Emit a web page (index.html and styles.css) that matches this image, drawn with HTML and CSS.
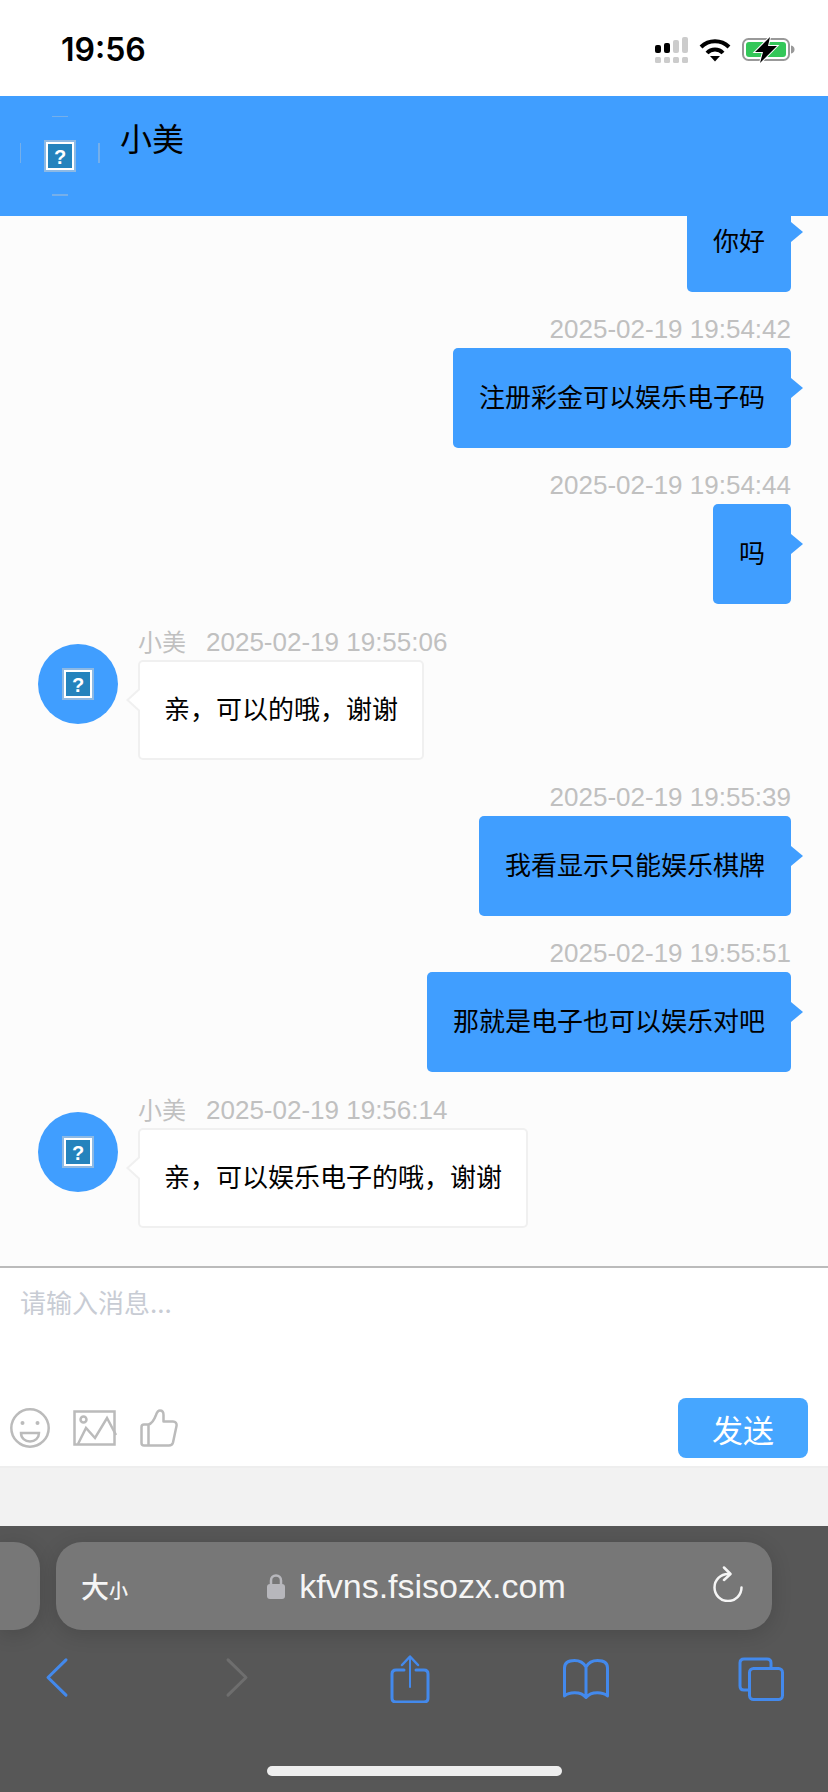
FILE: index.html
```html
<!DOCTYPE html>
<html lang="zh-CN">
<head>
    <meta charset="UTF-8">
    <meta name="viewport" content="width=device-width, initial-scale=1.0">
    <title>小美</title>
    <link rel="stylesheet" href="styles.css">
</head>
<body>
    <div class="status-bar">
        <span class="clock">19:56</span>
        <div class="status-icons">
            <svg class="signal" width="33" height="26" viewBox="0 0 33 26">
                <rect x="0" y="8" width="6" height="8" rx="2" fill="#000"/>
                <rect x="9" y="6" width="6" height="10" rx="2" fill="#000"/>
                <rect x="18" y="3" width="6" height="13" rx="2" fill="#ccc"/>
                <rect x="27" y="0" width="6" height="16" rx="2" fill="#ccc"/>
                <rect x="0" y="20" width="6" height="6" rx="1.5" fill="#ccc"/>
                <rect x="9" y="20" width="6" height="6" rx="1.5" fill="#ccc"/>
                <rect x="18" y="20" width="6" height="6" rx="1.5" fill="#ccc"/>
                <rect x="27" y="20" width="6" height="6" rx="1.5" fill="#ccc"/>
            </svg>
            <svg class="wifi" width="32" height="25" viewBox="0 0 32 25" fill="none" stroke="#000" stroke-width="4">
                <path d="M2 10A20 20 0 0 1 30 10"/>
                <path d="M8 16A11 11 0 0 1 24 16"/>
                <path d="M11 19H21L16 24.5Z" fill="#000" stroke="none"/>
            </svg>
            <svg class="battery" width="53" height="26" viewBox="0 0 53 26">
                <rect x="1" y="2" width="46" height="21" rx="5.5" fill="none" stroke="#999" stroke-width="2"/>
                <rect x="4" y="5" width="40" height="15" rx="3" fill="#34c759"/>
                <path d="M49 8.5c2.5.5 3.5 2 3.5 4s-1 3.500-3.500 4Z" fill="#999"/>
                <path d="M28 0 13 15H21L18 26 35 9H26Z" fill="#000" stroke="#fff" stroke-width="2" paint-order="stroke"/>
            </svg>
        </div>
    </div>

    <header class="chat-head">
        <div class="head-avatar">
            <svg width="80" height="80" viewBox="0 0 80 80">
                <path d="M32 0H48M0 27V47M79 27V47M32 79H48" stroke="#d8cfc4" stroke-width="1" stroke-opacity=".7" fill="none"/>
                <g transform="translate(24 24)">
                    <rect width="32" height="32" fill="#8db9e4"/>
                    <rect x="2" y="2" width="28" height="28" fill="#fff"/>
                    <rect x="4" y="4" width="24" height="24" fill="#2483bd"/>
                    <text x="16" y="24" class="missing-mark">?</text>
                </g>
            </svg>
        </div>
        <h1 class="head-name">小美</h1>
    </header>

    <main class="chat-log">
        <div class="msg msg-out">
            <div class="bubble">你好</div>
        </div>
        <div class="msg msg-out">
            <div class="msg-time">2025-02-19 19:54:42</div>
            <div class="bubble">注册彩金可以娱乐电子码</div>
        </div>
        <div class="msg msg-out">
            <div class="msg-time">2025-02-19 19:54:44</div>
            <div class="bubble">吗</div>
        </div>
        <div class="msg msg-in">
            <div class="avatar">
                <svg width="32" height="32" viewBox="0 0 32 32">
                    <rect width="32" height="32" fill="#8db9e4"/>
                    <rect x="2" y="2" width="28" height="28" fill="#fff"/>
                    <rect x="4" y="4" width="24" height="24" fill="#2483bd"/>
                    <text x="16" y="24" class="missing-mark">?</text>
                </svg>
            </div>
            <div class="msg-body">
                <div class="msg-time"><span class="msg-from">小美</span>2025-02-19 19:55:06</div>
                <div class="bubble">亲，可以的哦，谢谢</div>
            </div>
        </div>
        <div class="msg msg-out">
            <div class="msg-time">2025-02-19 19:55:39</div>
            <div class="bubble">我看显示只能娱乐棋牌</div>
        </div>
        <div class="msg msg-out">
            <div class="msg-time">2025-02-19 19:55:51</div>
            <div class="bubble">那就是电子也可以娱乐对吧</div>
        </div>
        <div class="msg msg-in">
            <div class="avatar">
                <svg width="32" height="32" viewBox="0 0 32 32">
                    <rect width="32" height="32" fill="#8db9e4"/>
                    <rect x="2" y="2" width="28" height="28" fill="#fff"/>
                    <rect x="4" y="4" width="24" height="24" fill="#2483bd"/>
                    <text x="16" y="24" class="missing-mark">?</text>
                </svg>
            </div>
            <div class="msg-body">
                <div class="msg-time"><span class="msg-from">小美</span>2025-02-19 19:56:14</div>
                <div class="bubble">亲，可以娱乐电子的哦，谢谢</div>
            </div>
        </div>
    </main>

    <section class="composer">
        <div class="composer-input">请输入消息...</div>
        <div class="composer-tools">
            <div class="tool-icons">
                <svg width="40" height="40" viewBox="0 0 40 40" fill="none" stroke="#bbb" stroke-width="2.500">
                    <circle cx="20" cy="20" r="18.700"/>
                    <circle cx="12.500" cy="15" r="2" fill="#bbb" stroke="none"/>
                    <circle cx="27.500" cy="15" r="2" fill="#bbb" stroke="none"/>
                    <path d="M11 25H29C29 30 25 33.500 20 33.500S11 30 11 25Z"/>
                </svg>
                <svg width="44" height="36" viewBox="0 0 44 36" fill="none" stroke="#bbb" stroke-width="2.500">
                    <rect x="1.500" y="1.500" width="40" height="33"/>
                    <circle cx="10.500" cy="9.500" r="3"/>
                    <path d="M5 34 13 18 22 28 34 8 43 25"/>
                </svg>
                <svg width="38" height="38" viewBox="0 0 38 38" fill="none" stroke="#bbb" stroke-width="2.500" stroke-linejoin="round">
                    <path d="M8.500 15.500H4C2.500 15.500 1.500 16.500 1.500 18V34C1.500 35.500 2.500 36.500 4 36.500H29C31 36.500 32.500 35.500 33 33.500L36.500 17C37 14.500 35.500 12.500 33 12.500H23.500V6C23.500 3 22 1.500 20 1.500 18 1.500 17 3 16 6 14.500 10 12 14.500 8.500 15.500V36.500"/>
                </svg>
            </div>
            <button class="send-btn">发送</button>
        </div>
    </section>
    <div class="page-gap"></div>

    <footer class="browser-bar">
        <div class="url-row">
            <div class="url-stub"></div>
            <div class="url-pill">
                <span class="text-size">大<small>小</small></span>
                <div class="url-host">
                    <svg width="18" height="25" viewBox="0 0 18 25">
                        <rect x="0" y="10" width="18" height="15" rx="3" fill="#b7b7bc"/>
                        <path d="M4 11V6.500C4 3.500 6 1.500 9 1.500S14 3.500 14 6.500V11" fill="none" stroke="#b7b7bc" stroke-width="2.500"/>
                    </svg>
                    <span>kfvns.fsisozx.com</span>
                </div>
                <svg class="reload" width="30" height="36" viewBox="0 0 30 36" fill="none" stroke="#f5f5f5" stroke-width="2.500" stroke-linecap="round" stroke-linejoin="round">
                    <path d="M15 8A13.500 13.500 0 1 0 28.500 21.500"/>
                    <path d="M11 1.500 17.500 8 11 14"/>
                </svg>
            </div>
        </div>
        <nav class="nav-row">
            <svg width="48" height="48" viewBox="0 0 48 48" fill="none" stroke="#4389ec" stroke-width="3" stroke-linecap="round" stroke-linejoin="round">
                <path d="M33 6 15 24 33 42" transform="translate(0 -1) scale(1 .98)"/>
            </svg>
            <svg width="48" height="48" viewBox="0 0 48 48" fill="none" stroke="#6e6e6e" stroke-width="3" stroke-linecap="round" stroke-linejoin="round">
                <path d="M19 6 37 24 19 42" transform="translate(0 -1) scale(1 .98)"/>
            </svg>
            <svg width="48" height="48" viewBox="0 0 48 48" fill="none" stroke="#4389ec" stroke-width="3" stroke-linecap="round" stroke-linejoin="round">
                <path d="M18 15H10C7.500 15 6 16.500 6 19V43C6 45.500 7.500 47 10 47H38C40.500 47 42 45.500 42 43V19C42 16.500 40.500 15 38 15H30"/>
                <path d="M24 32V2" stroke-width="2"/>
                <path d="M16 10 24 1.500 32 10" stroke-width="2.500"/>
            </svg>
            <svg width="48" height="40" viewBox="0 0 48 40" fill="none" stroke="#4389ec" stroke-width="3" stroke-linejoin="round">
                <path d="M24 37V8C21.500 3.500 17.500 1.500 12.500 1.500 6.500 1.500 2.500 4 2.500 9V37C7 33 18.500 32 24 38.500 29.500 32 41 33 45.500 37V9C45.500 4 41.500 1.500 35.500 1.500 30.500 1.500 26.500 3.500 24 8"/>
            </svg>
            <svg width="46" height="44" viewBox="0 0 46 44" fill="none" stroke="#4389ec" stroke-width="3">
                <path d="M11 33H6C3.500 33 2 31.500 2 29V6C2 3.500 3.500 2 6 2H29C31.500 2 33 3.500 33 6V11"/>
                <rect x="11.500" y="11.500" width="33" height="31" rx="4"/>
            </svg>
        </nav>
        <div class="home-bar"></div>
    </footer>
</body>
</html>
```

FILE: styles.css
```css
* {
    box-sizing: border-box;
}
html, body {
    margin: 0;
    padding: 0;
}
body {
    width: 828px;
    height: 1792px;
    display: flex;
    flex-direction: column;
    overflow: hidden;
    font-family: "Noto Sans CJK SC", "Liberation Sans", sans-serif;
    color: #000;
    background-color: #fff;
}

/* status bar */
.status-bar {
    height: 96px;
    flex: none;
    display: flex;
    justify-content: space-between;
    padding: 37px 33px 0 61px;
    background-color: #fff;
}
.clock {
    font-family: Inter, "Liberation Sans", sans-serif;
    font-size: 32px;
    font-weight: 600;
    line-height: 26px;
}
.status-icons {
    display: flex;
    align-items: flex-start;
    gap: 11px;
}

/* header */
.chat-head {
    height: 120px;
    flex: none;
    display: flex;
    gap: 20px;
    padding: 20px;
    background-color: #409eff;
}
.head-avatar {
    width: 80px;
    height: 80px;
}
.head-name {
    margin: 0;
    font-size: 32px;
    font-weight: 400;
    line-height: 42px;
}
.missing-mark {
    font-family: "Liberation Sans", sans-serif;
    font-size: 20px;
    font-weight: 700;
    text-anchor: middle;
    fill: #fff;
}

/* messages */
.chat-log {
    flex: 1;
    min-height: 0;
    display: flex;
    flex-direction: column;
    justify-content: flex-end;
    overflow: hidden;
    padding: 0 37px 38px 38px;
    background-color: #fcfcfc;
}
.msg {
    flex: none;
    margin-top: 22px;
}
.msg-out {
    display: flex;
    flex-direction: column;
    align-items: flex-end;
}
.msg-in {
    display: flex;
    gap: 20px;
}
.msg-body {
    display: flex;
    flex-direction: column;
    align-items: flex-start;
}
.msg-time {
    height: 30px;
    margin-bottom: 4px;
    font-family: "Liberation Sans", "Noto Sans CJK SC", sans-serif;
    font-size: 26px;
    line-height: 30px;
    color: #c0c0c0;
}
.msg-from {
    margin-right: 20px;
    font-family: "Noto Sans CJK SC", sans-serif;
    font-size: 24px;
}
.avatar {
    width: 80px;
    height: 80px;
    flex: none;
    margin-top: 18px;
    display: flex;
    align-items: center;
    justify-content: center;
    border-radius: 50%;
    background-color: #409eff;
}
.bubble {
    position: relative;
    height: 100px;
    padding: 24px 26px 28px;
    font-size: 26px;
    line-height: 48px;
    white-space: nowrap;
    border-radius: 5px;
}
.msg-out .bubble {
    background-color: #409eff;
}
.msg-out .bubble::after {
    content: "";
    position: absolute;
    top: 30px;
    right: -12px;
    border-left: 12px solid #409eff;
    border-top: 10px solid transparent;
    border-bottom: 10px solid transparent;
}
.msg-in .bubble {
    padding: 22px 24px 26px;
    background-color: #fff;
    border: 2px solid #f0f0f0;
}
.msg-in .bubble::before,
.msg-in .bubble::after {
    content: "";
    position: absolute;
    top: 27px;
    left: -14px;
    border-right: 12px solid #f0f0f0;
    border-top: 11px solid transparent;
    border-bottom: 11px solid transparent;
}
.msg-in .bubble::after {
    left: -11px;
    border-right-color: #fff;
}

/* input box */
.composer {
    height: 202px;
    flex: none;
    padding: 14px 20px 10px 10px;
    background-color: #fff;
    border-top: 2px solid #bbb;
    border-bottom: 2px solid #eee;
}
.composer-input {
    height: 40px;
    padding-left: 10px;
    font-size: 26px;
    line-height: 40px;
    color: #c8ccd4;
}
.composer-tools {
    margin-top: 76px;
    display: flex;
    justify-content: space-between;
}
.tool-icons {
    display: flex;
    align-items: center;
    gap: 23px;
    height: 60px;
}
.send-btn {
    width: 130px;
    height: 60px;
    padding: 0;
    border: none;
    border-radius: 8px;
    font-family: inherit;
    font-size: 31px;
    color: #fff;
    background-color: #46a6ff;
}
.page-gap {
    height: 58px;
    flex: none;
    background-color: #f2f2f2;
}

/* safari bottom bar */
.browser-bar {
    height: 266px;
    flex: none;
    padding-top: 16px;
    background-color: #575757;
}
.url-row {
    display: flex;
    gap: 16px;
    height: 88px;
}
.url-stub {
    width: 40px;
    border-radius: 0 26px 26px 0;
    background-color: #777;
    box-shadow: 0 4px 20px rgba(0,0,0,0.15);
}
.url-pill {
    width: 716px;
    display: flex;
    align-items: center;
    justify-content: space-between;
    padding: 0 29px 0 25px;
    border-radius: 26px;
    background-color: #777;
    box-shadow: 0 4px 20px rgba(0,0,0,0.15);
}
.text-size {
    font-size: 28px;
    font-weight: 500;
    color: #f5f5f5;
}
.text-size small {
    font-size: 19px;
}
.url-host {
    display: flex;
    align-items: center;
    gap: 14px;
    margin-right: 8px;
    font-family: "Liberation Sans", sans-serif;
    font-size: 34px;
    color: #f5f5f5;
}
.reload {
    margin-top: -4px;
}
.nav-row {
    display: flex;
    justify-content: space-between;
    align-items: center;
    height: 48px;
    margin-top: 25px;
    padding: 0 44px 0 33px;
}
.home-bar {
    width: 295px;
    height: 10px;
    margin: 63px 0 0 267px;
    border-radius: 5px;
    background-color: #eee;
}
```
